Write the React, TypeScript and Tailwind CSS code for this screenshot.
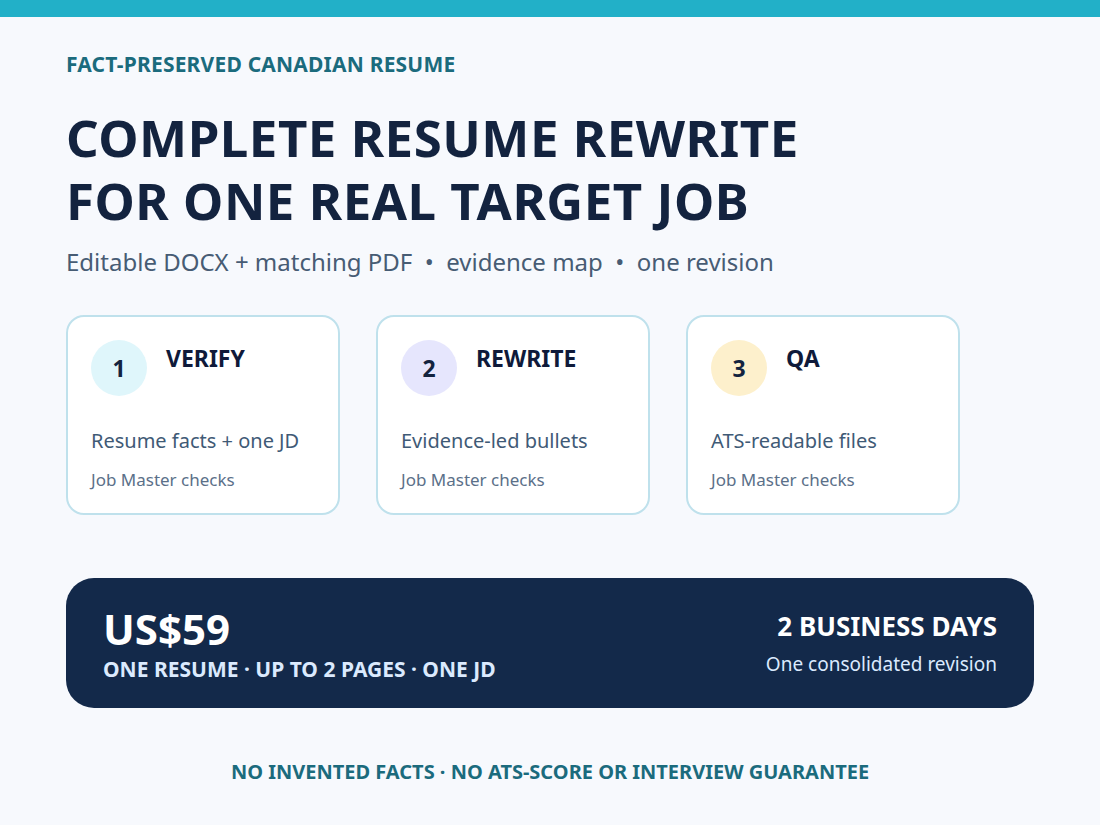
export default function App() {
  const steps = [
    { n: '1', t: 'VERIFY', d: 'Resume facts + one JD', bg: 'bg-[#dff6fb]' },
    { n: '2', t: 'REWRITE', d: 'Evidence-led bullets', bg: 'bg-[#e6e6fd]' },
    { n: '3', t: 'QA', d: 'ATS-readable files', bg: 'bg-[#fdf0cc]' },
  ]
  return (
    <div className="w-[1100px] h-[825px] bg-[#f7f9fd] font-['Liberation_Sans'] overflow-hidden">
      <div className="h-[17px] bg-[#22b0c8]" />
      <div className="px-[66px]">
        <div className="mt-[35px] text-[21px] font-bold text-[#1b6b7d] tracking-[0.2px] leading-6">FACT-PRESERVED CANADIAN RESUME</div>
        <h1 className="mt-[30px] text-[51px] font-bold text-[#13233f] leading-[63px] tracking-[0.5px]">
          COMPLETE RESUME REWRITE<br />FOR ONE REAL TARGET JOB
        </h1>
        <div className="mt-[16px] text-[24px] text-[#475c74] leading-7">
          Editable DOCX + matching PDF &nbsp;•&nbsp; evidence map &nbsp;•&nbsp; one revision
        </div>
        <div className="mt-[39px] flex gap-[36px]">
          {steps.map((s) => (
            <div key={s.n} className="w-[274px] h-[200px] bg-white border-2 border-[#bfe1ec] rounded-[18px] px-[23px] pt-[23px]">
              <div className="flex">
                <div className={`w-[56px] h-[56px] rounded-full ${s.bg} flex items-center justify-center text-[23px] font-bold text-[#13233f]`}>{s.n}</div>
                <div className="ml-[19px] mt-[4px] text-[23px] font-bold text-[#0f1a3a] leading-7">{s.t}</div>
              </div>
              <div className="mt-[33px] text-[20px] text-[#3f5a76] leading-6">{s.d}</div>
              <div className="mt-[17px] text-[17px] text-[#5b7089] leading-5">Job Master checks</div>
            </div>
          ))}
        </div>
        <div className="mt-[63px] w-[968px] h-[130px] bg-[#13294a] rounded-[28px] px-[37px] flex items-center justify-between">
          <div>
            <div className="text-[42px] font-bold text-white leading-[48px]">US$59</div>
            <div className="mt-[4px] text-[21px] font-bold text-[#dbeafe] leading-6">ONE RESUME · UP TO 2 PAGES · ONE JD</div>
          </div>
          <div className="text-right">
            <div className="text-[26px] font-bold text-white leading-8">2 BUSINESS DAYS</div>
            <div className="mt-[10px] text-[19px] text-[#dbeafe] leading-6">One consolidated revision</div>
          </div>
        </div>
        <div className="mt-[52px] w-[968px] text-center text-[20px] font-bold text-[#1b6b7d] leading-6">
          NO INVENTED FACTS · NO ATS-SCORE OR INTERVIEW GUARANTEE
        </div>
      </div>
    </div>
  )
}
